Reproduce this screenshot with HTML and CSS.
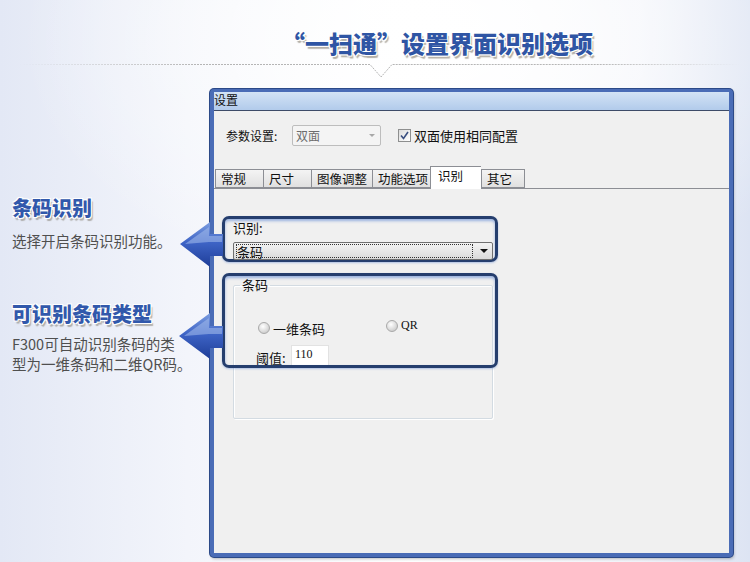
FILE: index.html
```html
<!DOCTYPE html>
<html lang="zh-CN">
<head>
    <meta charset="UTF-8">
    <title>一扫通 设置界面识别选项</title>
    <link rel="stylesheet" href="styles.css">
</head>
<body>
    <div class="page">
        <!-- Header -->
        <header class="header">
            <h1 class="headline">“一扫通”设置界面识别选项</h1>
            <svg class="divider" width="750" height="22" viewBox="0 0 750 22">
                <defs>
                    <linearGradient id="lineFade" x1="0" x2="1" y1="0" y2="0">
                        <stop offset="0" stop-color="#b5b5b5" stop-opacity="0"/>
                        <stop offset="0.25" stop-color="#b5b5b5"/>
                        <stop offset="0.8" stop-color="#b5b5b5"/>
                        <stop offset="1" stop-color="#b5b5b5" stop-opacity="0"/>
                    </linearGradient>
                </defs>
                <path d="M20 7.5 H370 L381 20 L392 7.5 H740" fill="none" stroke="url(#lineFade)" stroke-width="1" stroke-dasharray="2 1"/>
            </svg>
        </header>

        <div class="main">
            <!-- Notes -->
            <div class="notes">
                <h2 class="note-title">条码识别</h2>
                <p class="note-text">选择开启条码识别功能。</p>
                <h2 class="note-title note-second">可识别条码类型</h2>
                <p class="note-text">F300可自动识别条码的类<br>型为一维条码和二维QR码。</p>
            </div>

            <!-- Settings window -->
            <div class="window">
                <div class="titlebar"><span class="win-title">设置</span></div>
                <div class="win-body">
                    <div class="param-row">
                        <span class="param-label">参数设置:</span>
                        <div class="select-box">
                            <span>双面</span>
                            <span class="select-arrow"></span>
                        </div>
                        <label class="check">
                            <span class="check-box">
                                <svg width="9" height="9" viewBox="0 0 9 9"><path d="M1 4.5 L3.5 7.5 L8 1" fill="none" stroke="#3a4f80" stroke-width="1.6"/></svg>
                            </span>
                            双面使用相同配置
                        </label>
                    </div>

                    <div class="tabs">
                        <div class="tab tab-w48">常规</div>
                        <div class="tab tab-w48">尺寸</div>
                        <div class="tab tab-w61">图像调整</div>
                        <div class="tab tab-w58">功能选项</div>
                        <div class="tab tab-active">识别</div>
                        <div class="tab tab-w44">其它</div>
                    </div>

                    <div class="panel">
                        <div class="mark-box mark-first">
                            <div class="field-label">识别:</div>
                            <div class="combo">
                                <span class="combo-focus">条码</span>
                                <span class="combo-arrow"></span>
                            </div>
                        </div>

                        <fieldset class="group">
                            <legend class="group-legend">条码</legend>
                            <div class="radio-row">
                                <label class="radio radio-first"><span class="radio-dot"></span>一维条码</label>
                                <label class="radio radio-qr"><span class="radio-dot"></span><span class="latin">QR</span></label>
                            </div>
                            <div class="threshold-row">
                                <span>阈值:</span>
                                <span class="num-input latin">110</span>
                            </div>
                        </fieldset>

                        <div class="mark-box mark-second"></div>
                    </div>
                </div>
            </div>
        </div>

        <!-- Callout arrows -->
        <svg class="arrows" width="50" height="145" viewBox="0 0 50 145">
            <defs>
                <linearGradient id="arrowFill" x1="0" x2="0" y1="0" y2="1">
                    <stop offset="0" stop-color="#7b9de0"/>
                    <stop offset="0.45" stop-color="#3e64c6"/>
                    <stop offset="1" stop-color="#1e3d98"/>
                </linearGradient>
            </defs>
            <path d="M4 25 L34 3 L34 15 L47 15 L47 37 L34 37 L34 48 Z" fill="url(#arrowFill)"/>
            <path d="M9 25 L33 8 L33 17 L46 17 L46 23 L33 23 Z" fill="#9fb8ea" opacity="0.6"/>
            <path d="M3 117 L34 94 L34 107 L47 107 L47 129 L34 129 L34 140 Z" fill="url(#arrowFill)"/>
            <path d="M8 117 L33 99 L33 109 L46 109 L46 115 L33 115 Z" fill="#9fb8ea" opacity="0.6"/>
        </svg>
    </div>
</body>
</html>
```

FILE: styles.css
```css
* {
    margin: 0;
    padding: 0;
    box-sizing: border-box;
}

body {
    font-family: "Noto Sans CJK SC", "Noto Sans", sans-serif;
    width: 750px;
    height: 562px;
    overflow: hidden;
}

.page {
    position: relative;
    width: 750px;
    height: 562px;
    display: flex;
    flex-direction: column;
    background:
        radial-gradient(ellipse 420px 260px at 440px 40px, #ffffff 0%, rgba(255, 255, 255, 0) 100%),
        linear-gradient(90deg, #e3e8f5 0%, #f3f5fb 25%, #ffffff 55%, #f2f4fa 85%, #dde4f3 100%);
}

/* Header */
.header {
    height: 89px;
}

.headline {
    padding: 29px 0 0 281px;
    font-size: 24px;
    line-height: 28px;
    font-weight: 900;
    color: #2f55a4;
    text-shadow:
        1px 1px 0 #fff, -1px -1px 0 #fff, 1px -1px 0 #fff, -1px 1px 0 #fff,
        2px 3px 1px rgba(90, 80, 60, 0.45);
}

.divider {
    display: block;
}

/* Main area */
.main {
    flex: 1;
    display: flex;
}

.notes {
    width: 210px;
    padding: 107px 0 0 12px;
}

.note-title {
    font-size: 20px;
    line-height: 24px;
    font-weight: 900;
    color: #3158ab;
    text-shadow:
        1px 1px 0 #fff, -1px -1px 0 #fff, 1px -1px 0 #fff, -1px 1px 0 #fff,
        2px 3px 1px rgba(90, 80, 60, 0.4);
}

.note-second {
    margin-top: 51px;
}

.note-text {
    margin-top: 11px;
    font-size: 14.5px;
    line-height: 20px;
    color: #4f4f4f;
}

.note-second + .note-text {
    margin-top: 8px;
}

/* Window */
.window {
    width: 523px;
    height: 468px;
    border: 4px solid #4a6cb6;
    border-top-width: 3px;
    border-radius: 4px;
    box-shadow: 0 0 0 1px #2c4a88, 1px 2px 3px rgba(0, 0, 0, 0.25);
    background: #f0f0f0;
    display: flex;
    flex-direction: column;
    font-size: 12px;
    color: #111;
}

.titlebar {
    height: 19px;
    background: linear-gradient(#d3e3f5, #b2cbeb);
    border-bottom: 1px solid #3d4b68;
}

.win-title {
    display: block;
    font-size: 12px;
    line-height: 15px;
}

.win-body {
    flex: 1;
    display: flex;
    flex-direction: column;
}

.param-row {
    display: flex;
    align-items: center;
    height: 21px;
    margin: 14px 0 0 12px;
}

.param-label {
    width: 66px;
}

.select-box {
    width: 89px;
    height: 21px;
    border: 1px solid #bdbdbd;
    border-radius: 2px;
    background: #f4f4f4;
    color: #6d6d6d;
    padding-left: 3px;
    display: flex;
    align-items: center;
    justify-content: space-between;
}

.select-arrow {
    width: 0;
    height: 0;
    margin-right: 5px;
    border-left: 3px solid transparent;
    border-right: 3px solid transparent;
    border-top: 3px solid #a8a8a8;
}

.check {
    display: flex;
    align-items: center;
    margin-left: 17px;
    font-size: 13px;
}

.check-box {
    width: 13px;
    height: 13px;
    margin-right: 3px;
    border: 1px solid #8e8f8f;
    background: linear-gradient(135deg, #dcdcdc, #ffffff);
    display: flex;
    align-items: center;
    justify-content: center;
}

/* Tabs */
.tabs {
    display: flex;
    align-items: flex-end;
    margin: 21px 0 0 1px;
    height: 22px;
    position: relative;
    z-index: 1;
}

.tab {
    height: 19px;
    margin-bottom: 1px;
    padding: 0 5px;
    border: 1px solid #8c8e94;
    border-right: none;
    background: linear-gradient(#f4f4f4, #e0e0e0);
    font-size: 12.5px;
    line-height: 17px;
    white-space: nowrap;
    overflow: hidden;
}

.tab-w48 { width: 48px; }
.tab-w61 { width: 61px; }
.tab-w58 { width: 58px; }
.tab-w44 { width: 44px; border-right: 1px solid #8c8e94; }

.tab-active {
    width: 51px;
    height: 23px;
    margin-bottom: 0;
    padding: 0 7px;
    background: #ffffff;
    border-bottom: none;
    line-height: 18px;
}

.panel {
    flex: 1;
    position: relative;
    border-top: 1px solid #8c8e94;
    margin-top: -1px;
    padding: 27px 0 0 8px;
}

/* Highlight boxes */
.mark-box {
    border: 3px solid #253e6e;
    border-radius: 7px;
    box-shadow: inset 0 2px 3px rgba(80, 125, 210, 0.55), 0 1px 2px rgba(80, 125, 210, 0.4);
}

.mark-first {
    width: 276px;
    height: 46px;
    padding: 1px 0 0 8px;
}

.mark-second {
    position: absolute;
    left: 8px;
    top: 84px;
    width: 276px;
    height: 95px;
}

.field-label {
    line-height: 16px;
    font-size: 13px;
}

.combo {
    width: 260px;
    height: 18px;
    margin-top: 6px;
    border: 1px solid #707070;
    border-radius: 2px;
    background: linear-gradient(#f3f3f3, #dadada);
    display: flex;
    align-items: center;
    justify-content: space-between;
    padding: 0 4px 0 2px;
}

.combo-focus {
    width: 237px;
    height: 14px;
    line-height: 13px;
    font-size: 13px;
    border: 1px dotted #333;
}

.combo-arrow {
    width: 0;
    height: 0;
    border-left: 4px solid transparent;
    border-right: 4px solid transparent;
    border-top: 4px solid #111;
}

/* Group box */
.group {
    width: 260px;
    margin: 16px 0 0 11px;
    padding: 27px 0 52px 24px;
    border: 1px solid #d3dbe2;
    box-shadow: inset 1px 1px 0 #ffffff, 1px 1px 0 #ffffff;
    border-radius: 2px;
}

.group-legend {
    margin-left: -18px;
    padding: 0 2px;
    font-size: 13px;
    line-height: 14px;
}

.radio-row {
    display: flex;
    align-items: center;
    height: 16px;
}

.radio {
    display: flex;
    align-items: center;
    font-size: 13px;
}

.radio-first {
    width: 128px;
    margin-top: 2px;
}

.radio-qr {
    margin-top: -3px;
}

.radio-dot {
    width: 12px;
    height: 12px;
    margin-right: 3px;
    border-radius: 50%;
    border: 1px solid #a9a9a9;
    background: radial-gradient(circle at 40% 35%, #ffffff 0%, #dcdcdc 55%, #bdbdbd 100%);
}

.latin {
    font-family: "Liberation Serif", "DejaVu Serif", serif;
    font-size: 12px;
}

.threshold-row {
    display: flex;
    align-items: flex-end;
    margin: 10px 0 0 -2px;
    height: 21px;
    font-size: 13px;
}

.threshold-row span:first-child {
    width: 35px;
    line-height: 16px;
}

.num-input {
    width: 38px;
    height: 21px;
    background: #ffffff;
    border: 1px solid #e2e2e2;
    padding-left: 3px;
    line-height: 17px;
}

/* Arrows over the window edge */
.arrows {
    position: absolute;
    left: 176px;
    top: 219px;
}
```
